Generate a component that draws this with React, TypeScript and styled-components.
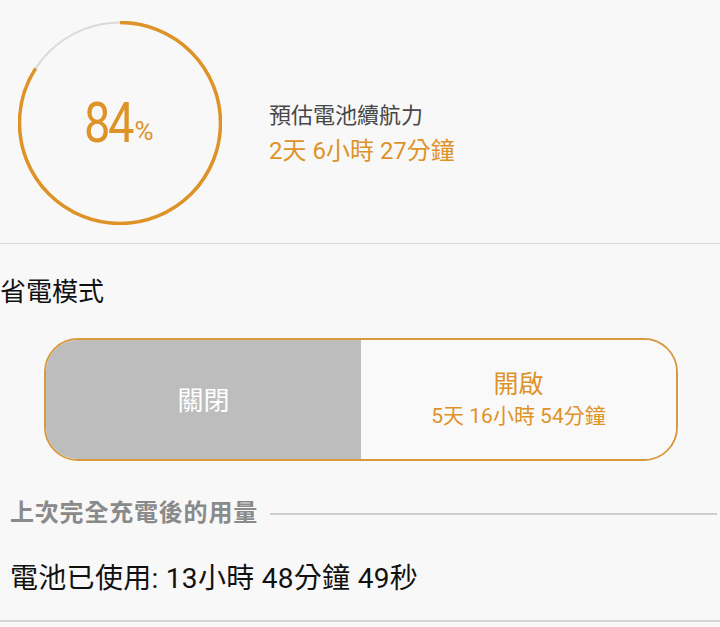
import React from "react";
import styled, { createGlobalStyle } from "styled-components";

const Global = createGlobalStyle`
  html, body { margin: 0; padding: 0; background: #f8f8f8; }
  body { font-family: Roboto, "Noto Sans CJK TC", sans-serif; }
`;

const ORANGE = "#de9328";

const Page = styled.div`
  width: 720px;
  height: 627px;
  overflow: hidden;
  background: #f8f8f8;
`;

const Top = styled.section`
  display: flex;
  align-items: center;
  padding: 21px 0 18px 18px;
  border-bottom: 1px solid #d6d6d6;
`;

const Gauge = styled.div`
  position: relative;
  width: 204px;
  height: 204px;
  flex: none;
`;

const GaugeLabel = styled.div`
  position: absolute;
  inset: 0;
  display: flex;
  align-items: center;
  justify-content: center;
  color: ${ORANGE};
  padding-right: 12px;
`;

const Big = styled.span`
  font-family: Roboto, sans-serif;
  font-weight: 400;
  font-size: 56px;
  letter-spacing: -3px;
  display: inline-block;
  transform: scaleX(0.84);
  transform-origin: right center;
`;

const Pct = styled.span`
  font-family: Roboto, sans-serif;
  font-size: 26px;
  margin-top: 16px;
  margin-left: 3px;
`;

const Info = styled.div`
  margin: 22px 0 0 47px;
  display: flex;
  flex-direction: column;
  gap: 6px;
`;

const InfoLabel = styled.div`
  font-size: 22px;
  color: #474747;
  line-height: 28px;
`;

const InfoValue = styled.div`
  font-size: 24px;
  color: ${ORANGE};
  line-height: 30px;
`;

const Title = styled.div`
  margin-top: 33px;
  font-size: 26px;
  line-height: 31px;
  color: #111;
`;

const Toggle = styled.div`
  margin: 30px 0 0 44px;
  width: 634px;
  height: 123px;
  box-sizing: border-box;
  border: 2px solid #d79a3e;
  border-radius: 34px;
  overflow: hidden;
  display: flex;
`;

const Half = styled.div<{ $off?: boolean }>`
  flex: 1;
  display: flex;
  flex-direction: column;
  align-items: center;
  justify-content: center;
  background: ${(p) => (p.$off ? "#bdbdbd" : "#f9f9f9")};
  color: ${(p) => (p.$off ? "#ffffff" : ORANGE)};
`;

const HalfMain = styled.div<{ $off?: boolean }>`
  font-size: ${(p) => (p.$off ? "26px" : "25px")};
  line-height: 30px;
  margin-top: ${(p) => (p.$off ? "3px" : "0")};
`;

const HalfSub = styled.div`
  font-size: 21px;
  line-height: 26px;
  margin-top: 3px;
`;

const SectionHead = styled.div`
  margin-top: 38px;
  display: flex;
  align-items: center;
  padding-left: 10px;
  gap: 12px;
`;

const SectionText = styled.div`
  font-size: 24px;
  line-height: 29px;
  font-weight: 700;
  color: #8a8a8a;
  letter-spacing: 0.8px;
`;

const SectionLine = styled.div`
  flex: 1;
  height: 2px;
  background: #cfcfcf;
  margin-right: 3px;
`;

const Usage = styled.div`
  margin-top: 35px;
  padding: 0 0 25px 10px;
  font-size: 28px;
  line-height: 32px;
  color: #111;
  letter-spacing: 0.3px;
  border-bottom: 2px solid #d6d6d6;
`;

export default function App() {
  const r = 100.5;
  const c = 2 * Math.PI * r;
  const pct = 0.84;
  return (
    <Page>
      <Global />
      <Top>
        <Gauge>
          <svg width="204" height="204" viewBox="0 0 204 204">
            <circle cx="102" cy="102" r={r} fill="none" stroke="#dadada" strokeWidth="2" />
            <circle
              cx="102"
              cy="102"
              r={r}
              fill="none"
              stroke={ORANGE}
              strokeWidth="3.5"
              strokeDasharray={`${c * pct} ${c}`}
              transform="rotate(-90 102 102)"
            />
          </svg>
          <GaugeLabel>
            <Big>84</Big>
            <Pct>%</Pct>
          </GaugeLabel>
        </Gauge>
        <Info>
          <InfoLabel>預估電池續航力</InfoLabel>
          <InfoValue>2天 6小時 27分鐘</InfoValue>
        </Info>
      </Top>
      <Title>省電模式</Title>
      <Toggle>
        <Half $off>
          <HalfMain $off>關閉</HalfMain>
        </Half>
        <Half>
          <HalfMain>開啟</HalfMain>
          <HalfSub>5天 16小時 54分鐘</HalfSub>
        </Half>
      </Toggle>
      <SectionHead>
        <SectionText>上次完全充電後的用量</SectionText>
        <SectionLine />
      </SectionHead>
      <Usage>電池已使用: 13小時 48分鐘 49秒</Usage>
    </Page>
  );
}
